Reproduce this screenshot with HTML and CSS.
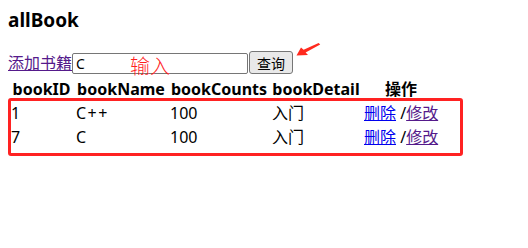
FILE: index.html
```html
<!DOCTYPE html>
<html lang="zh">
<head>
<meta charset="utf-8">
<title>allBook</title>
<link rel="stylesheet" href="styles.css">
</head>
<body>
<div class="page">
  <h3 class="title">allBook</h3>
  <div class="toolbar">
    <a class="link link-visited" href="#">添加书籍</a><input class="search" type="text" value="C"><button class="btn" type="button">查询</button>
  </div>
  <table class="books">
    <thead>
      <tr>
        <th class="c-id">bookID</th>
        <th class="c-name">bookName</th>
        <th class="c-count">bookCounts</th>
        <th class="c-detail">bookDetail</th>
        <th class="c-op">操作</th>
      </tr>
    </thead>
    <tbody>
      <tr>
        <td>1</td>
        <td class="plus">C++</td>
        <td>100</td>
        <td>入门</td>
        <td><a class="link" href="#">删除</a> /<a class="link link-visited" href="#">修改</a></td>
      </tr>
      <tr>
        <td>7</td>
        <td>C</td>
        <td>100</td>
        <td>入门</td>
        <td><a class="link" href="#">删除</a> /<a class="link link-visited" href="#">修改</a></td>
      </tr>
    </tbody>
  </table>
  <span class="note">输入</span>
  <svg class="arrow" viewBox="294 42 27 16" width="27" height="16" aria-hidden="true">
    <path d="M296.5,55.5 L301,47.5 L303.6,49.8 L318.6,43 L320.2,44.6 L305.6,52.4 L308,55 Z" fill="#ff2a1e"/>
  </svg>
  <div class="highlight"></div>
</div>
</body>
</html>
```

FILE: styles.css
```css
html {
  margin: 0;
  padding: 0;
  min-height: 100%;
  background: #ffffff;
}

body {
  margin: 8px;
  min-height: 220px;
  font-family: "Noto Sans", "Noto Sans CJK SC", sans-serif;
  font-size: 16px;
  color: #000000;
  background: #ffffff;
}

.page {
  position: relative;
  min-height: 200px;
}

.title {
  margin: 0;
  font-size: 19px;
  line-height: 24px;
  font-weight: 700;
}

.toolbar {
  display: flex;
  align-items: flex-end;
  margin-top: 19px;
  height: 23px;
}

.link {
  color: #0000ee;
  text-decoration: underline;
}

.link-visited {
  color: #551a8b;
}

.toolbar .link {
  line-height: 20px;
  margin-bottom: 1px;
}

.search {
  box-sizing: border-box;
  width: 176px;
  height: 21px;
  margin: 0;
  padding: 0 3px;
  border: 1px solid #767676;
  border-radius: 2px;
  font-family: "Noto Sans", "Noto Sans CJK SC", sans-serif;
  font-size: 14px;
  color: #000000;
  background: #ffffff;
}

.btn {
  box-sizing: border-box;
  width: 44px;
  height: 23px;
  margin: 0 0 0 1px;
  padding: 0;
  border: 1px solid #767676;
  border-radius: 3px;
  background: #e9e9e9;
  font-family: "Noto Sans CJK SC", sans-serif;
  font-size: 14px;
  line-height: 20px;
  color: #000000;
}

.books {
  margin-top: 2px;
  border-spacing: 2px;
  border-collapse: separate;
  line-height: 20px;
}

.books th,
.books td {
  padding: 1px;
  white-space: nowrap;
  vertical-align: middle;
}

.books th {
  font-weight: 700;
  text-align: center;
}

.books td {
  text-align: left;
}

.books .plus {
  letter-spacing: 1.5px;
}

.c-id { width: 61px; }
.c-name { width: 90px; }
.c-count { width: 98px; }
.c-detail { width: 88px; }
.c-op { width: 74px; }

.note {
  position: absolute;
  left: 122px;
  top: 48px;
  font-family: "Noto Sans CJK SC", sans-serif;
  font-weight: 300;
  font-size: 20px;
  line-height: 20px;
  color: #ff1f1f;
}

.arrow {
  position: absolute;
  left: 286px;
  top: 34px;
}

.highlight {
  position: absolute;
  left: 0;
  top: 90px;
  width: 455px;
  height: 58px;
  box-sizing: border-box;
  border: 3px solid #ff2222;
  border-radius: 3px;
}
```
